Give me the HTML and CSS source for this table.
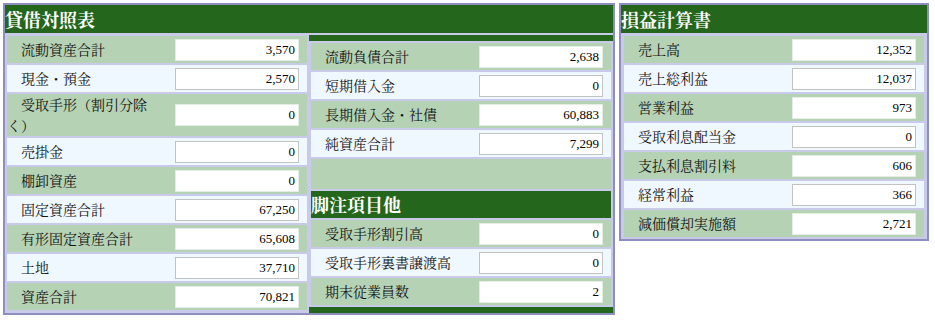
FILE: index.html
```html
<!DOCTYPE html>
<html lang="ja">
<head>
<meta charset="utf-8">
<title>財務情報</title>
<link rel="stylesheet" href="styles.css">
</head>
<body>
<div class="page">
  <section class="panel panel-bs">
    <div class="hd">貸借対照表</div>
    <div class="bs-body">
      <div class="col-left">
        <div class="row g"><div class="lbl">流動資産合計</div><input class="val" type="text" value="3,570" readonly></div>
        <div class="row l"><div class="lbl">現金・預金</div><input class="val" type="text" value="2,570" readonly></div>
        <div class="row g tall"><div class="lbl">受取手形（割引分除く）</div><input class="val" type="text" value="0" readonly></div>
        <div class="row l"><div class="lbl">売掛金</div><input class="val" type="text" value="0" readonly></div>
        <div class="row g"><div class="lbl">棚卸資産</div><input class="val" type="text" value="0" readonly></div>
        <div class="row l"><div class="lbl">固定資産合計</div><input class="val" type="text" value="67,250" readonly></div>
        <div class="row g"><div class="lbl">有形固定資産合計</div><input class="val" type="text" value="65,608" readonly></div>
        <div class="row l"><div class="lbl">土地</div><input class="val" type="text" value="37,710" readonly></div>
        <div class="row g"><div class="lbl">資産合計</div><input class="val" type="text" value="70,821" readonly></div>
      </div>
      <div class="col-mid">
        <div class="strip"></div>
        <div class="row g"><div class="lbl">流動負債合計</div><input class="val" type="text" value="2,638" readonly></div>
        <div class="row l"><div class="lbl">短期借入金</div><input class="val" type="text" value="0" readonly></div>
        <div class="row g"><div class="lbl">長期借入金・社債</div><input class="val" type="text" value="60,883" readonly></div>
        <div class="row l"><div class="lbl">純資産合計</div><input class="val" type="text" value="7,299" readonly></div>
        <div class="empty"></div>
        <div class="hd hd2">脚注項目他</div>
        <div class="row g"><div class="lbl">受取手形割引高</div><input class="val" type="text" value="0" readonly></div>
        <div class="row l"><div class="lbl">受取手形裏書譲渡高</div><input class="val" type="text" value="0" readonly></div>
        <div class="row g"><div class="lbl">期末従業員数</div><input class="val" type="text" value="2" readonly></div>
        <div class="strip strip-bottom"></div>
      </div>
    </div>
  </section>
  <section class="panel panel-pl">
    <div class="hd">損益計算書</div>
    <div class="pl-body">
      <div class="row g"><div class="lbl">売上高</div><input class="val" type="text" value="12,352" readonly></div>
      <div class="row l"><div class="lbl">売上総利益</div><input class="val" type="text" value="12,037" readonly></div>
      <div class="row g"><div class="lbl">営業利益</div><input class="val" type="text" value="973" readonly></div>
      <div class="row l"><div class="lbl">受取利息配当金</div><input class="val" type="text" value="0" readonly></div>
      <div class="row g"><div class="lbl">支払利息割引料</div><input class="val" type="text" value="606" readonly></div>
      <div class="row l"><div class="lbl">経常利益</div><input class="val" type="text" value="366" readonly></div>
      <div class="row g"><div class="lbl">減価償却実施額</div><input class="val" type="text" value="2,721" readonly></div>
    </div>
  </section>
</div>
</body>
</html>
```

FILE: styles.css
```css
* { box-sizing: border-box; }

body {
  margin: 0;
  background: #ffffff;
  font-family: "Noto Serif CJK JP", "Noto Sans CJK JP", serif;
}

.page {
  display: flex;
  align-items: flex-start;
  gap: 4px;
  padding: 3px 0 0 3px;
}

.panel {
  border: 2px solid #8e8ebe;
  background: #c9c9e9;
}

.panel-bs {
  width: 612px;
  height: 312px;
  display: flex;
  flex-direction: column;
}

.panel-pl {
  width: 310px;
}

.hd {
  flex: none;
  background: #24661c;
  color: #ffffff;
  font-weight: 700;
  font-size: 18px;
  height: 28px;
  line-height: 28px;
  white-space: nowrap;
}

.bs-body {
  flex: 1;
  display: flex;
  gap: 2px;
  padding-left: 2px;
}

.col-left {
  width: 300px;
  display: flex;
  flex-direction: column;
  gap: 2px;
  padding-top: 3px;
}

.col-mid {
  width: 304px;
  display: flex;
  flex-direction: column;
  gap: 2px;
  padding-top: 2px;
}

.col-mid .row,
.col-mid .hd2,
.col-mid .empty {
  margin: 0 2px;
}

.strip {
  flex: none;
  height: 6px;
  background: #24661c;
}

.strip-bottom {
  flex: 1;
}

.hd2 {
  height: 27px;
  line-height: 27px;
}

.empty {
  flex: none;
  height: 30px;
  background: #b5d2b5;
}

.pl-body {
  display: flex;
  flex-direction: column;
  gap: 2px;
  padding: 3px 3px 2px 3px;
}

.row {
  flex: none;
  display: grid;
  grid-template-columns: 1fr 124px;
  column-gap: 4px;
  align-items: center;
  height: 27px;
  padding-right: 8px;
  font-size: 14px;
  line-height: 21px;
  color: #141414;
}

.row.tall {
  height: 42px;
}

.row.g { background: #b5d2b5; }
.row.l { background: #f0f8ff; }

.lbl {
  text-indent: 14px;
  text-spacing-trim: space-all;
}

.row.tall .lbl {
  width: 145px;
}

.val {
  display: block;
  width: 124px;
  height: 22px;
  margin: 0;
  padding: 0 3px 0 2px;
  border: 1px solid #c2c2c2;
  border-radius: 0;
  background: #ffffff;
  font: 13px "Liberation Serif", "Times New Roman", serif;
  color: #000000;
  text-align: right;
  outline: none;
}

.row.g .val {
  border-color: #e4ede4;
}
```
